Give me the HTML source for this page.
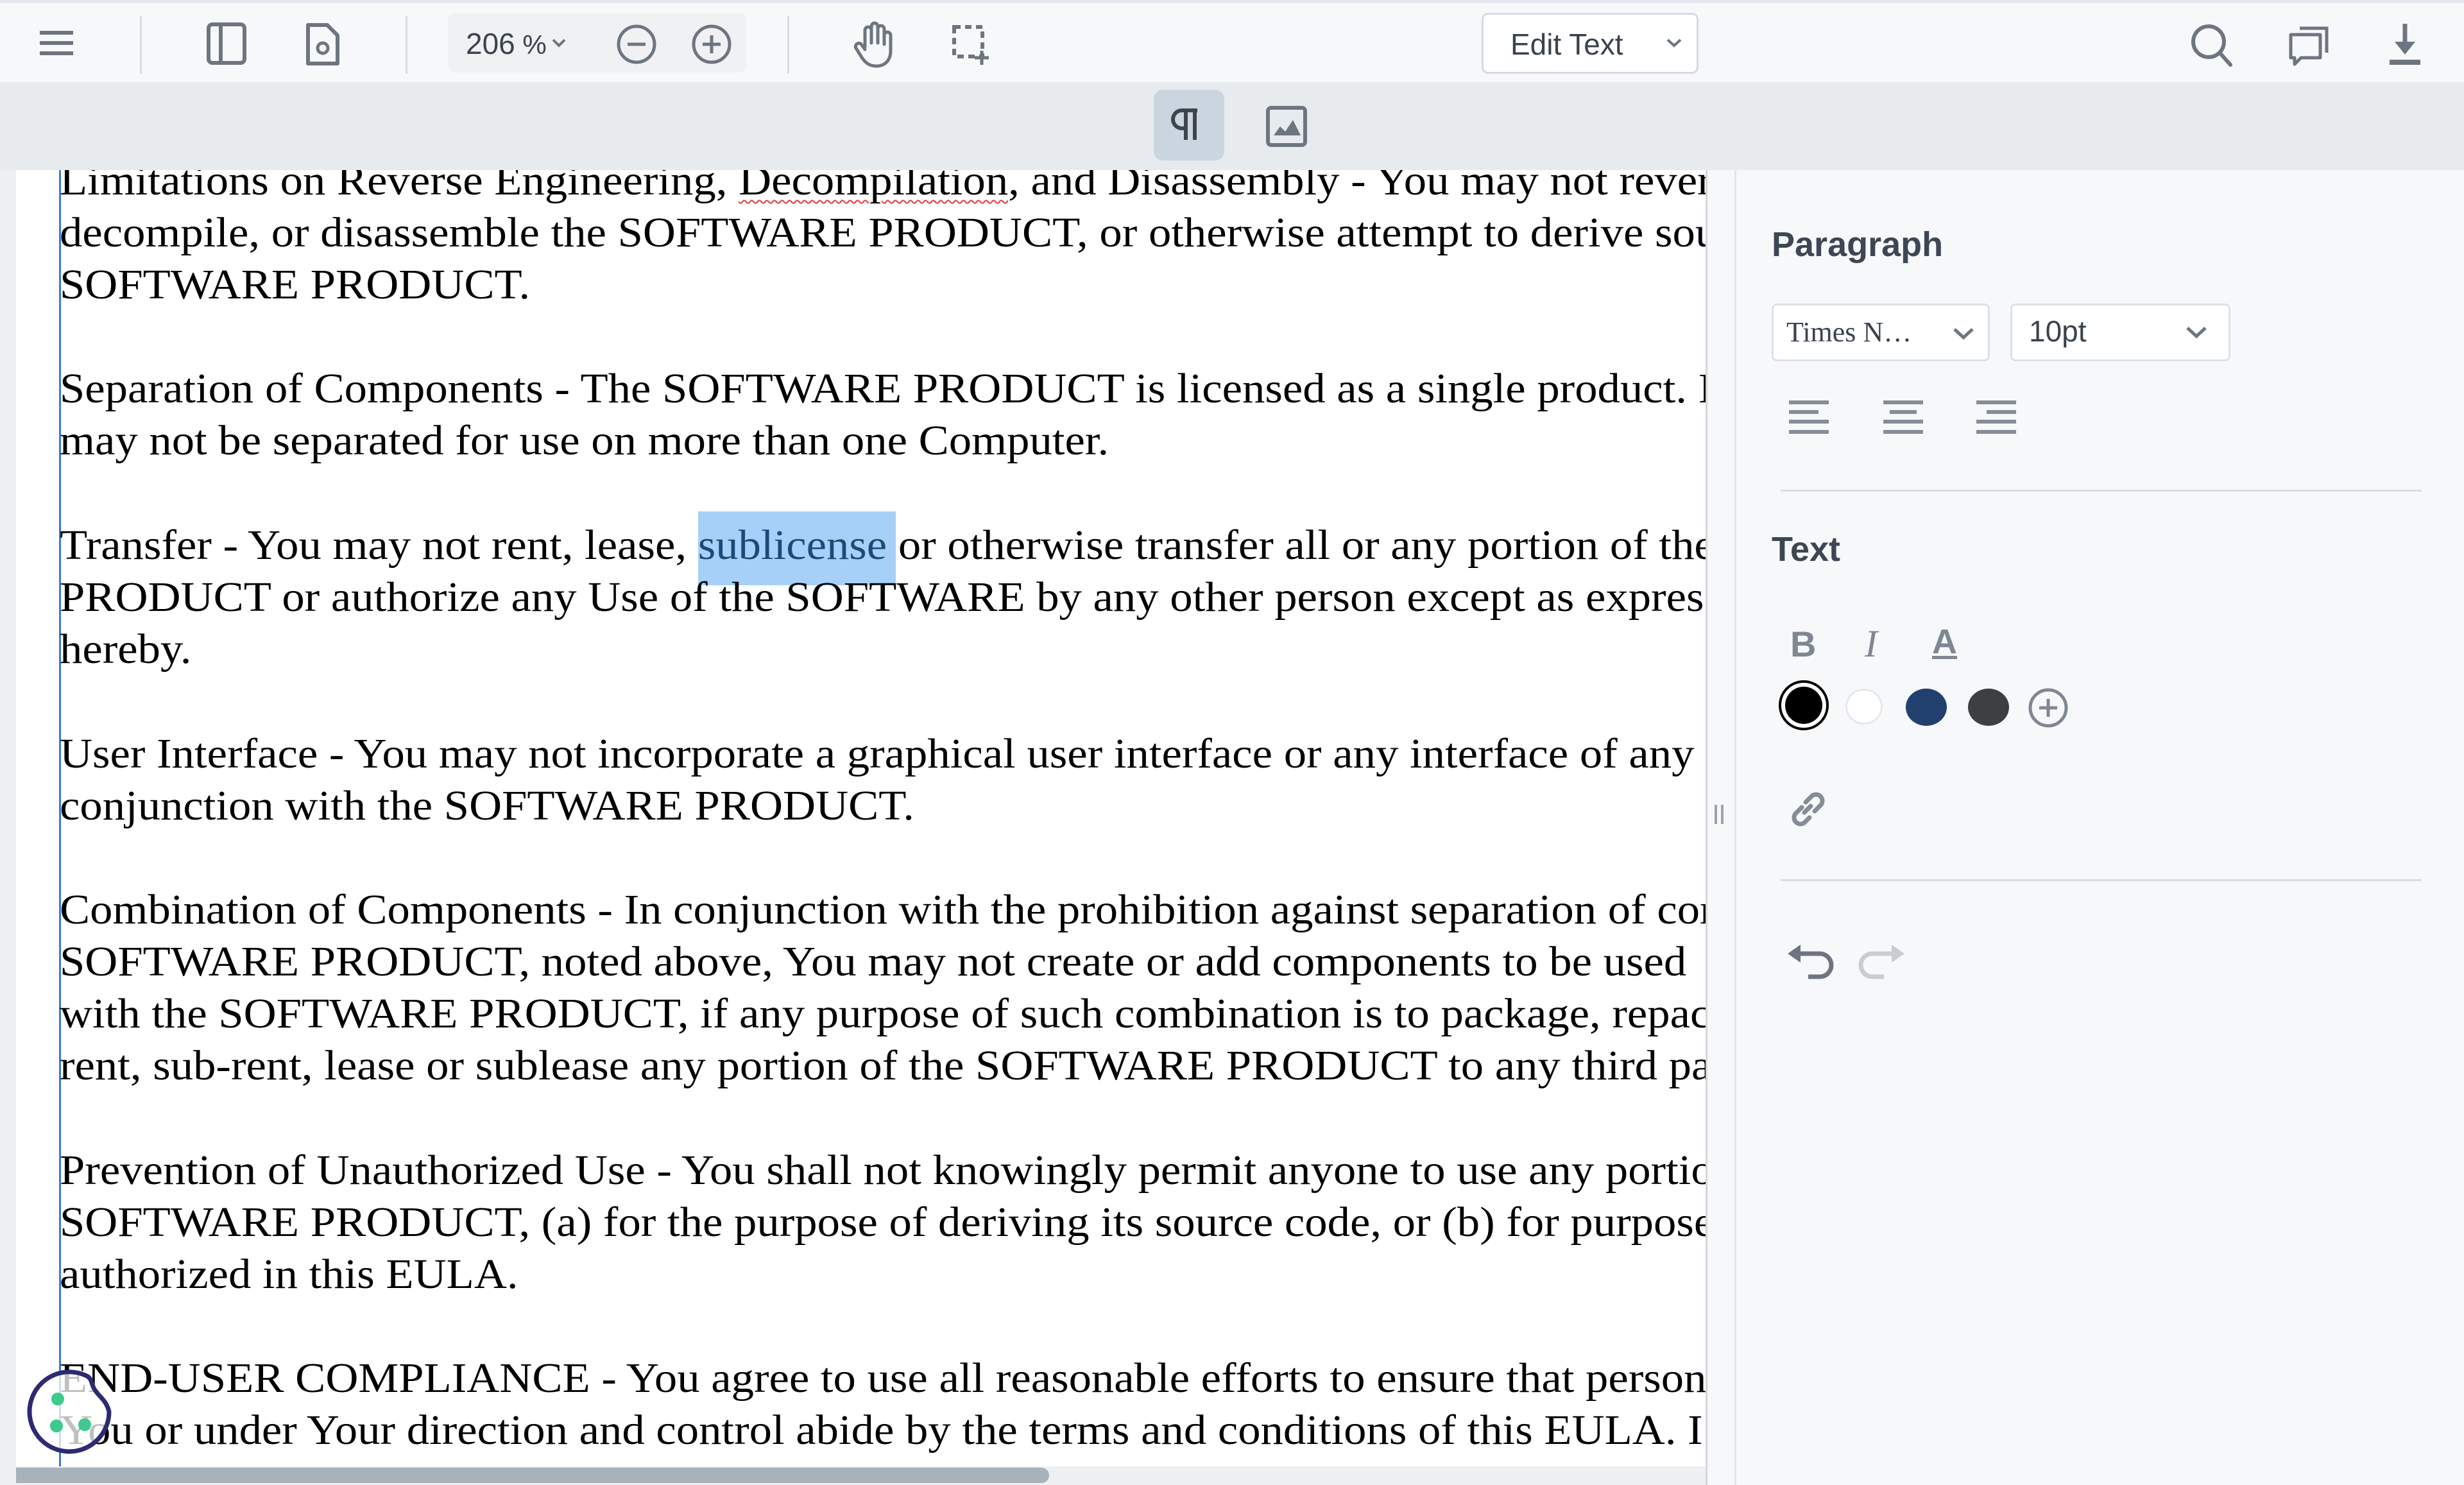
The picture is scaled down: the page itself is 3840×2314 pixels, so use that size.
<!DOCTYPE html>
<html><head><meta charset="utf-8">
<style>
*{margin:0;padding:0;box-sizing:border-box}
html,body{width:3840px;height:2314px;overflow:hidden;background:#f7f8fa;font-family:"Liberation Sans",sans-serif}
.abs{position:absolute}
#top{left:0;top:0;width:3840px;height:128px;background:#f7f8fa;border-top:5px solid #e3e8f0;z-index:5}
#sub{left:0;top:128px;width:3840px;height:137px;background:#e8ebee;z-index:5}
#doc{left:0;top:265px;width:2660px;height:2049px;background:#fff;overflow:hidden;border-left:25px solid #eef0f3}
.ln{position:absolute;left:68px;white-space:nowrap;font-family:"Liberation Serif",serif;font-size:66px;line-height:81px;color:#000;height:81px;transform:scaleX(1.071);transform-origin:0 0}
.div{position:absolute;width:3px;height:90px;top:20px;background:#d8dbe0}
#panel{left:2703px;top:265px;width:1137px;height:2049px;background:#f7f8fa;border-left:3px solid #e2e5e9}
.h{position:absolute;font-size:54px;font-weight:bold;color:#3d4754}
.dd{position:absolute;height:90px;background:#fff;border:3px solid #dde1e6;border-radius:8px}
.sep{position:absolute;left:69px;width:999px;height:3px;background:#d9dde2}
svg{position:absolute;overflow:visible}
</style></head><body>

<div id="top" class="abs">
  <svg style="left:62px;top:40px" width="52" height="46" viewBox="0 0 52 46"><g stroke="#6d7580" stroke-width="6"><line x1="0" y1="6" x2="52" y2="6"/><line x1="0" y1="22" x2="52" y2="22"/><line x1="0" y1="38" x2="52" y2="38"/></g></svg>
  <div class="div" style="left:218px"></div>
  <svg style="left:322px;top:30px" width="62" height="66"><rect x="3" y="3" width="56" height="60" rx="6" fill="none" stroke="#6d7580" stroke-width="6"/><line x1="22" y1="3" x2="22" y2="63" stroke="#6d7580" stroke-width="6"/></svg>
  <svg style="left:476px;top:30px" width="54" height="68"><path d="M4 4 H34 L50 20 V64 H4 Z" fill="none" stroke="#6d7580" stroke-width="6" stroke-linejoin="round"/><circle cx="27" cy="40" r="8" fill="none" stroke="#6d7580" stroke-width="5"/></svg>
  <div class="div" style="left:632px"></div>
  <div class="abs" style="left:698px;top:15px;width:465px;height:93px;background:#eff1f3;border-radius:12px"></div>
  <div class="abs" style="left:726px;top:36px;font-size:46px;color:#3a424d">206<span style="font-size:42px"> %</span></div>
  <svg style="left:860px;top:55px" width="22" height="14"><path d="M2 2 L11 11 L20 2" fill="none" stroke="#6d7580" stroke-width="4"/></svg>
  <svg style="left:960px;top:32px" width="64" height="64"><circle cx="32" cy="32" r="28" fill="none" stroke="#6d7580" stroke-width="5"/><line x1="18" y1="32" x2="46" y2="32" stroke="#6d7580" stroke-width="5"/></svg>
  <svg style="left:1077px;top:32px" width="64" height="64"><circle cx="32" cy="32" r="28" fill="none" stroke="#6d7580" stroke-width="5"/><line x1="18" y1="32" x2="46" y2="32" stroke="#6d7580" stroke-width="5"/><line x1="32" y1="18" x2="32" y2="46" stroke="#6d7580" stroke-width="5"/></svg>
  <div class="div" style="left:1227px"></div>
  <svg style="left:1330px;top:28px" width="66" height="74" viewBox="0 0 66 74"><path d="M18 40 V14 a5 5 0 0 1 10 0 V34 M28 30 V8 a5 5 0 0 1 10 0 V34 M38 30 V12 a5 5 0 0 1 10 0 V36 M48 34 V22 a5 5 0 0 1 10 0 V46 C58 62 48 70 36 70 C26 70 20 66 14 58 L4 42 a5 5 0 0 1 9 -5 L18 44" fill="none" stroke="#6d7580" stroke-width="5" stroke-linejoin="round" stroke-linecap="round"/></svg>
  <svg style="left:1484px;top:34px" width="60" height="64"><rect x="3" y="3" width="44" height="46" fill="none" stroke="#6d7580" stroke-width="6" stroke-dasharray="10 7"/><line x1="46" y1="40" x2="46" y2="62" stroke="#6d7580" stroke-width="5"/><line x1="35" y1="51" x2="57" y2="51" stroke="#6d7580" stroke-width="5"/></svg>
  <div class="abs" style="left:2309px;top:15px;width:338px;height:95px;background:#fff;border:3px solid #d6dae0;border-radius:10px"></div>
  <div class="abs" style="left:2354px;top:37px;font-size:46px;color:#3a424d">Edit Text</div>
  <svg style="left:2597px;top:55px" width="24" height="14"><path d="M2 2 L12 11 L22 2" fill="none" stroke="#6d7580" stroke-width="4"/></svg>
  <svg style="left:3412px;top:30px" width="70" height="72"><circle cx="30" cy="30" r="24" fill="none" stroke="#6d7580" stroke-width="6"/><line x1="48" y1="48" x2="64" y2="66" stroke="#6d7580" stroke-width="6" stroke-linecap="round"/></svg>
  <svg style="left:3566px;top:33px" width="66" height="66"><path d="M18 6 H60 V44" fill="none" stroke="#6d7580" stroke-width="5"/><path d="M4 16 H50 V52 H20 L10 62 V52 H4 Z" fill="none" stroke="#6d7580" stroke-width="5" stroke-linejoin="round"/></svg>
  <svg style="left:3718px;top:30px" width="60" height="70"><line x1="30" y1="2" x2="30" y2="36" stroke="#6d7580" stroke-width="7"/><path d="M14 30 H46 L30 50 Z" fill="#6d7580"/><rect x="6" y="58" width="48" height="8" fill="#6d7580"/></svg>
</div>

<div id="sub" class="abs">
  <div class="abs" style="left:1798px;top:12px;width:110px;height:110px;background:#cbd5df;border-radius:14px"></div>
  <svg style="left:1822px;top:40px" width="60" height="54"><path d="M44 4 H20 a14 14 0 0 0 0 28 H26 M26 4 V50 M40 4 V50" fill="none" stroke="#3e444c" stroke-width="6"/></svg>
  <svg style="left:1973px;top:37px" width="66" height="66"><rect x="3" y="3" width="58" height="58" rx="5" fill="none" stroke="#6d7580" stroke-width="6"/><path d="M12 46 L22 32 L30 40 L42 22 L54 46 Z" fill="#6d7580"/></svg>
</div>

<div id="doc" class="abs">
  <div class="abs" style="left:1063px;top:532px;width:308px;height:115px;background:#a6d0f7"></div>
  <div class="abs" style="left:67px;top:0;width:3px;height:2030px;background:#3a7ad0"></div>
  <div class="ln" style="top:-24px">Limitations on Reverse Engineering, <span style="text-decoration:underline wavy #e04040;text-decoration-thickness:2px;text-underline-offset:8px">Decompilation</span>, and Disassembly - You may not rever</div>
  <div class="ln" style="top:57px">decompile, or disassemble the SOFTWARE PRODUCT, or otherwise attempt to derive sou</div>
  <div class="ln" style="top:138px">SOFTWARE PRODUCT.</div>
  <div class="ln" style="top:300px">Separation of Components - The SOFTWARE PRODUCT is licensed as a single product. Its</div>
  <div class="ln" style="top:381px">may not be separated for use on more than one Computer.</div>
  <div class="ln" style="top:544px">Transfer - You may not rent, lease, <span style="color:#1b4a78">sublicense</span> or otherwise transfer all or any portion of the</div>
  <div class="ln" style="top:625px">PRODUCT or authorize any Use of the SOFTWARE by any other person except as expressly</div>
  <div class="ln" style="top:706px">hereby.</div>
  <div class="ln" style="top:869px">User Interface - You may not incorporate a graphical user interface or any interface of any</div>
  <div class="ln" style="top:950px">conjunction with the SOFTWARE PRODUCT.</div>
  <div class="ln" style="top:1112px">Combination of Components - In conjunction with the prohibition against separation of components</div>
  <div class="ln" style="top:1193px">SOFTWARE PRODUCT, noted above, You may not create or add components to be used</div>
  <div class="ln" style="top:1274px">with the SOFTWARE PRODUCT, if any purpose of such combination is to package, repackage</div>
  <div class="ln" style="top:1355px">rent, sub-rent, lease or sublease any portion of the SOFTWARE PRODUCT to any third party</div>
  <div class="ln" style="top:1518px">Prevention of Unauthorized Use - You shall not knowingly permit anyone to use any portion</div>
  <div class="ln" style="top:1599px">SOFTWARE PRODUCT, (a) for the purpose of deriving its source code, or (b) for purposes</div>
  <div class="ln" style="top:1680px">authorized in this EULA.</div>
  <div class="ln" style="top:1842px">END-USER COMPLIANCE - You agree to use all reasonable efforts to ensure that persons</div>
  <div class="ln" style="top:1923px">You or under Your direction and control abide by the terms and conditions of this EULA. I</div>
  <div class="ln" style="top:2004px">may also require that the SOFTWARE PRODUCT be used only in accordance with the terms</div>
  <div class="abs" style="left:-25px;top:2020px;width:2660px;height:29px;background:#eef0f3"></div>
  <div class="abs" style="left:-20px;top:2022px;width:1630px;height:24px;background:#a9b1ba;border-radius:12px"></div>
</div>
<div class="abs" style="left:2658px;top:265px;width:3px;height:2049px;background:#d2d6db"></div>
<div class="abs" style="left:2672px;top:1254px;width:4px;height:30px;background:#9aa2ac"></div>
<div class="abs" style="left:2682px;top:1254px;width:4px;height:30px;background:#9aa2ac"></div>

<svg style="left:40px;top:2130px;z-index:6" width="140" height="140" viewBox="0 0 140 140"><path d="M95 14 C104 18 102 28 108 36 C114 46 126 52 130 70 A62 62 0 1 1 95 14 Z" fill="rgba(255,255,255,0.75)" stroke="#2d2a72" stroke-width="7" stroke-linejoin="round"/><circle cx="50" cy="50" r="10" fill="#3ec98e"/><circle cx="48" cy="92" r="10" fill="#3ec98e"/><circle cx="92" cy="90" r="10" fill="#3ec98e"/></svg>

<div id="panel" class="abs">
  <div class="h" style="left:55px;top:85px">Paragraph</div>
  <div class="dd" style="left:55px;top:208px;width:340px"></div>
  <div class="abs" style="left:78px;top:227px;font-family:'Liberation Serif',serif;font-size:44px;color:#3a424d">Times N…</div>
  <svg style="left:337px;top:245px" width="34" height="20"><path d="M3 3 L17 16 L31 3" fill="none" stroke="#6d7580" stroke-width="5"/></svg>
  <div class="dd" style="left:427px;top:208px;width:343px"></div>
  <div class="abs" style="left:456px;top:224px;font-size:46px;color:#3a424d">10pt</div>
  <svg style="left:700px;top:243px" width="34" height="20"><path d="M3 3 L17 16 L31 3" fill="none" stroke="#6d7580" stroke-width="5"/></svg>
  <svg style="left:82px;top:358px" width="64" height="60"><g stroke="#858d97" stroke-width="6"><line x1="0" y1="4" x2="62" y2="4"/><line x1="0" y1="19" x2="46" y2="19"/><line x1="0" y1="34" x2="62" y2="34"/><line x1="0" y1="50" x2="62" y2="50"/></g></svg>
  <svg style="left:229px;top:358px" width="64" height="60"><g stroke="#858d97" stroke-width="6"><line x1="0" y1="4" x2="62" y2="4"/><line x1="10" y1="19" x2="52" y2="19"/><line x1="0" y1="34" x2="62" y2="34"/><line x1="0" y1="50" x2="62" y2="50"/></g></svg>
  <svg style="left:374px;top:358px" width="64" height="60"><g stroke="#858d97" stroke-width="6"><line x1="0" y1="4" x2="62" y2="4"/><line x1="16" y1="19" x2="62" y2="19"/><line x1="0" y1="34" x2="62" y2="34"/><line x1="0" y1="50" x2="62" y2="50"/></g></svg>
  <div class="sep" style="top:498px"></div>
  <div class="h" style="left:55px;top:560px">Text</div>
  <div class="abs" style="left:84px;top:706px;font-size:56px;font-weight:bold;color:#7e8792">B</div>
  <div class="abs" style="left:200px;top:704px;font-family:'Liberation Serif',serif;font-size:60px;font-style:italic;color:#7e8792">I</div>
  <div class="abs" style="left:305px;top:704px;font-size:54px;font-weight:bold;color:#7e8792;text-decoration:underline;text-decoration-thickness:5px;text-underline-offset:4px">A</div>
  <div class="abs" style="left:66px;top:795px;width:78px;height:78px;border-radius:50%;border:4px solid #000;background:#fff"></div>
  <div class="abs" style="left:76px;top:805px;width:58px;height:58px;border-radius:50%;background:#000"></div>
  <div class="abs" style="left:170px;top:808px;width:58px;height:56px;border-radius:50%;background:#fff;border:3px solid #e6e8eb"></div>
  <div class="abs" style="left:264px;top:808px;width:64px;height:58px;border-radius:50%;background:#22406e"></div>
  <div class="abs" style="left:361px;top:808px;width:64px;height:58px;border-radius:50%;background:#3e3f42"></div>
  <svg style="left:454px;top:806px" width="64" height="64"><circle cx="32" cy="32" r="28" fill="none" stroke="#7e8792" stroke-width="5"/><line x1="18" y1="32" x2="46" y2="32" stroke="#7e8792" stroke-width="5"/><line x1="32" y1="18" x2="32" y2="46" stroke="#7e8792" stroke-width="5"/></svg>
  <svg style="left:78px;top:963px" width="66" height="66" viewBox="0 0 66 66"><g fill="none" stroke="#858d97" stroke-width="7" stroke-linecap="round"><path d="M28 38 L38 28"/><path d="M24 30 L14 40 a10 10 0 0 0 14 14 L36 46"/><path d="M30 22 L40 12 a10 10 0 0 1 14 14 L44 36"/></g></svg>
  <div class="sep" style="top:1105px"></div>
  <svg style="left:78px;top:1207px" width="80" height="64"><path d="M16 14 H52 a18 18 0 0 1 0 36 H34" fill="none" stroke="#6d7580" stroke-width="7"/><path d="M2 14 L22 0 V28 Z" fill="#6d7580"/></svg>
  <svg style="left:186px;top:1207px" width="80" height="64"><path d="M60 14 H26 a18 18 0 0 0 0 36 H44" fill="none" stroke="#c8cdd3" stroke-width="7"/><path d="M76 14 L56 0 V28 Z" fill="#c8cdd3"/></svg>
</div>
</body></html>
